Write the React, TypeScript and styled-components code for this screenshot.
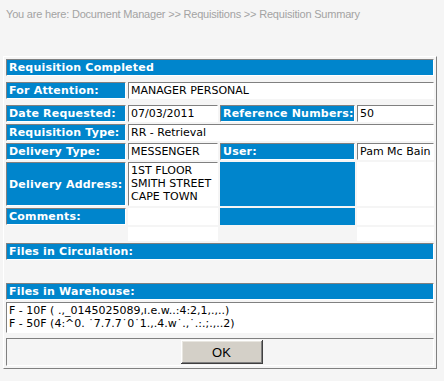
import styled, { createGlobalStyle } from "styled-components";

const GlobalStyle = createGlobalStyle`
  body {
    margin: 0;
    background: #f5f5f5;
  }
`;

// breadcrumb at the top of the page
const Breadcrumb = styled.div`
  padding: 8px 6px 0;
  font-family: "Liberation Sans", Arial, sans-serif;
  font-size: 11px;
  letter-spacing: -0.2px;
  color: #a3a3a3;
`;

// outer table, raised border
const Panel = styled.div`
  box-sizing: border-box;
  width: 434px;
  margin: 36px 0 0 3px;
  padding: 2px;
  border: 1px solid;
  border-color: #ffffff #808080 #808080 #ffffff;
  display: grid;
  grid-template-columns: 120px 90px 135px 77px;
  gap: 2px;
`;

type CellProps = {
  $tone?: "label" | "value" | "none";
  $span?: number;
  $tall?: number;
  $empty?: boolean;
};

const Cell = styled.div<CellProps>`
  box-sizing: border-box;
  grid-column: span ${(p) => p.$span || 1};
  height: ${(p) => p.$tall || 17}px;
  padding: 0 2px;
  border: 1px solid;
  border-color: ${(p) =>
    p.$empty || p.$tone === "none"
      ? "transparent"
      : "#808080 #ffffff #ffffff #808080"};
  background: ${(p) =>
    p.$tone === "label" ? "#0085cc" : p.$tone === "none" ? "transparent" : "#ffffff"};
  color: ${(p) => (p.$tone === "label" ? "#ffffff" : "#000000")};
  font-family: "DejaVu Sans", Verdana, sans-serif;
  font-size: 11px;
  font-weight: ${(p) => (p.$tone === "label" ? "bold" : "normal")};
  letter-spacing: ${(p) => (p.$tone === "label" ? "0.2px" : "0")};
  line-height: 15px;
  white-space: nowrap;
  overflow: hidden;
  display: flex;
  align-items: center;
`;

const Lines = styled.div`
  line-height: 13px;
  align-self: flex-start;
  padding-top: 1px;
`;

// extra spacing between groups of rows
const Spacer = styled.div<{ $h: number }>`
  grid-column: span 4;
  height: ${(p) => p.$h}px;
`;

const ButtonRow = styled.div`
  box-sizing: border-box;
  grid-column: span 4;
  height: 28px;
  border: 1px solid;
  border-color: #808080 #ffffff #ffffff #808080;
  display: flex;
  justify-content: center;
  align-items: center;
`;

const OkButton = styled.button`
  width: 82px;
  height: 24px;
  margin-left: 3px;
  padding: 0;
  border: none;
  background: #d4d0c8;
  box-shadow: inset -1px -1px #404040, inset 1px 1px #ffffff,
    inset -2px -2px #808080, inset 2px 2px #e8e6e0;
  font-family: "Liberation Sans", Arial, sans-serif;
  font-size: 13px;
  color: #000;
`;

const files = [
  "F - 10F ( .,_0145025089,ı.e.w..:4:2,1,.,..)",
  "F - 50F (4:^0. ˙7.7.7˙0˙1.,.4.w˙.,˙.:.;.,..2)",
];

export default function App() {
  return (
    <>
      <GlobalStyle />
      <Breadcrumb>
        You are here: Document Manager &gt;&gt; Requisitions &gt;&gt; Requisition Summary
      </Breadcrumb>
      <Panel>
        <Cell $tone="label" $span={4}>Requisition Completed</Cell>
        <Spacer $h={2} />
        <Cell $tone="label">For Attention:</Cell>
        <Cell $span={3}>MANAGER PERSONAL</Cell>
        <Spacer $h={2} />
        <Cell $tone="label">Date Requested:</Cell>
        <Cell>07/03/2011</Cell>
        <Cell $tone="label">Reference Numbers:</Cell>
        <Cell>50</Cell>
        <Cell $tone="label">Requisition Type:</Cell>
        <Cell $span={3}>RR - Retrieval</Cell>
        <Cell $tone="label">Delivery Type:</Cell>
        <Cell>MESSENGER</Cell>
        <Cell $tone="label">User:</Cell>
        <Cell>Pam Mc Bain</Cell>
        <Cell $tone="label" $tall={44}>Delivery Address:</Cell>
        <Cell $tall={44}>
          <Lines>
            1ST FLOOR
            <br />
            SMITH STREET
            <br />
            CAPE TOWN
          </Lines>
        </Cell>
        <Cell $tone="label" $tall={44} $empty />
        <Cell $tall={44} $empty />
        <Cell $tone="label">Comments:</Cell>
        <Cell $empty />
        <Cell $tone="label" $empty />
        <Cell $empty />
        <Cell $tone="none" $tall={14} />
        <Cell $tall={14} $empty />
        <Cell $tone="none" $tall={14} />
        <Cell $tall={14} $empty />
        <Cell $tone="label" $span={4}>Files in Circulation:</Cell>
        <Spacer $h={19} />
        <Cell $tone="label" $span={4}>Files in Warehouse:</Cell>
        <Cell $span={4} $tall={31}>
          <Lines>
            {files.map((f) => (
              <div key={f}>{f}</div>
            ))}
          </Lines>
        </Cell>
        <Spacer $h={1} />
        <ButtonRow>
          <OkButton>OK</OkButton>
        </ButtonRow>
      </Panel>
    </>
  );
}
